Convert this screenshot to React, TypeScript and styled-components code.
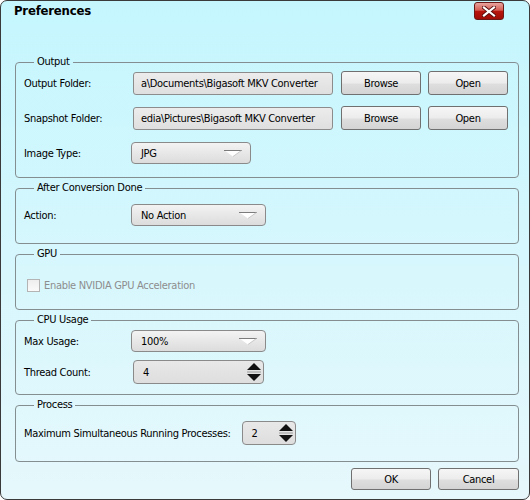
import styled, { createGlobalStyle } from 'styled-components';

const GlobalStyle = createGlobalStyle`
  html, body {
    margin: 0;
    padding: 0;
  }
  body {
    font-family: 'DejaVu Sans Condensed', 'Liberation Sans', sans-serif;
    font-size: 11px;
    letter-spacing: -0.3px;
    color: #000;
  }
`;

const Window = styled.div`
  position: relative;
  box-sizing: border-box;
  width: 530px;
  height: 500px;
  border: 1px solid #3a3a3a;
  border-radius: 7px;
  background: linear-gradient(#c5f6fe, #e6f8fc);
  display: flex;
  flex-direction: column;
  overflow: hidden;
`;

const TitleBar = styled.div`
  display: flex;
  justify-content: space-between;
  align-items: flex-start;
  height: 54px;
  padding: 0 25px 0 13px;
`;

const Title = styled.h1`
  margin: 3px 0 0;
  font-size: 13px;
  line-height: 14px;
  font-weight: bold;
  letter-spacing: -0.2px;
  font-family: 'DejaVu Sans Condensed', 'Liberation Sans', sans-serif;
`;

const CloseButton = styled.button`
  box-sizing: border-box;
  width: 30px;
  height: 18px;
  margin-top: 1px;
  padding: 0;
  border: 1px solid #6a1a16;
  border-radius: 3px;
  background: linear-gradient(#e7a49e 0%, #d65e54 45%, #b8160c 52%, #a00d06 100%);
  display: flex;
  align-items: center;
  justify-content: center;
`;

const Body = styled.div`
  display: flex;
  flex-direction: column;
  gap: 3px;
  padding: 0 10px 0 14px;
`;

const Group = styled.fieldset<{ $pad: string; $gap?: number }>`
  margin: 0;
  padding: ${(p) => p.$pad};
  border: 1px solid #848e90;
  border-radius: 4px;
  min-width: 0;
  display: flex;
  flex-direction: column;
  gap: ${(p) => p.$gap ?? 0}px;
`;

const Legend = styled.legend`
  margin-left: 10px;
  padding: 0 3px;
  font-size: 11px;
  line-height: 14px;
`;

const Row = styled.div`
  display: flex;
  align-items: center;
  height: 24px;
`;

const Label = styled.span<{ $wide?: boolean }>`
  flex-shrink: 0;
  width: ${(p) => (p.$wide ? 'auto' : '107px')};
  margin-right: ${(p) => (p.$wide ? '9px' : '0')};
  white-space: nowrap;
`;

const PathField = styled.div`
  box-sizing: border-box;
  width: 200px;
  height: 23px;
  margin-left: 2px;
  padding-left: 7px;
  border: 1px solid #8c8c8c;
  border-radius: 3px;
  background: linear-gradient(#ececec, #dfdfdf);
  display: flex;
  align-items: center;
  overflow: hidden;
  white-space: nowrap;
`;

const Button = styled.button<{ $width?: number; $height?: number }>`
  box-sizing: border-box;
  width: ${(p) => p.$width ?? 80}px;
  height: ${(p) => p.$height ?? 24}px;
  padding: 0;
  border: 1px solid #707070;
  border-radius: 3px;
  background: linear-gradient(#f6f6f6 0%, #ececec 50%, #dedede 55%, #d4d4d4 100%);
  font-family: inherit;
  font-size: 11px;
  letter-spacing: inherit;
  color: #000;
`;

const RowButtons = styled.div`
  display: flex;
  gap: 7px;
  margin-left: 8px;
`;

const Select = styled.div<{ $width: number }>`
  box-sizing: border-box;
  width: ${(p) => p.$width}px;
  height: 22px;
  padding: 0 8px 0 9px;
  border: 1px solid #8a8a8a;
  border-radius: 4px;
  background: linear-gradient(#f3f3f3, #dcdcdc);
  display: flex;
  align-items: center;
  justify-content: space-between;
`;

const Spinner = styled.div<{ $width: number }>`
  box-sizing: border-box;
  width: ${(p) => p.$width}px;
  height: 24px;
  margin-left: 2px;
  padding: 0 1px 0 9px;
  border: 1px solid #8a8a8a;
  border-radius: 4px;
  background: linear-gradient(#e8e8e8, #dedede);
  display: flex;
  align-items: center;
  justify-content: space-between;
`;

const CheckRow = styled.label`
  display: flex;
  align-items: center;
  height: 24px;
  color: #8d8d8d;
`;

const CheckBox = styled.span`
  box-sizing: border-box;
  width: 13px;
  height: 13px;
  margin: 0 4px 0 3px;
  border: 1px solid #b4b4b4;
  background: linear-gradient(#eeeeee, #fafafa);
`;

const Footer = styled.div`
  display: flex;
  justify-content: flex-end;
  gap: 7px;
  padding: 6px 10px 0 0;
`;

function DropArrow() {
  return (
    <svg width="18" height="7" viewBox="0 0 18 7">
      <polygon points="0.5,0.5 17.5,0.5 9,6.5" fill="#fff" />
      <line x1="0" y1="0.5" x2="18" y2="0.5" stroke="#7c7c7c" />
      <line x1="9" y1="6.5" x2="17.5" y2="0.5" stroke="#c8c8c8" />
    </svg>
  );
}

function SpinArrows() {
  return (
    <svg width="16" height="20" viewBox="0 0 16 20">
      <polygon points="1,8 15,8 8,1" fill="#111" />
      <line x1="1" y1="10" x2="15" y2="10" stroke="#9a9a9a" />
      <polygon points="1,12 15,12 8,19" fill="#111" />
    </svg>
  );
}

function CloseGlyph() {
  return (
    <svg width="14" height="11" viewBox="0 0 14 11">
      <path d="M2 1.5 L12 9.5 M12 1.5 L2 9.5" stroke="#5a1010" strokeWidth="4" strokeLinecap="square" />
      <path d="M2 1.5 L12 9.5 M12 1.5 L2 9.5" stroke="#fff" strokeWidth="2.2" strokeLinecap="square" />
    </svg>
  );
}

export default function App() {
  return (
    <>
      <GlobalStyle />
      <Window>
        <TitleBar>
          <Title>Preferences</Title>
          <CloseButton aria-label="Close">
            <CloseGlyph />
          </CloseButton>
        </TitleBar>
        <Body>
          <Group $pad="2px 8px 12px" $gap={11}>
            <Legend>Output</Legend>
            <Row>
              <Label>Output Folder:</Label>
              <PathField>a\Documents\Bigasoft MKV Converter</PathField>
              <RowButtons>
                <Button>Browse</Button>
                <Button>Open</Button>
              </RowButtons>
            </Row>
            <Row>
              <Label>Snapshot Folder:</Label>
              <PathField>edia\Pictures\Bigasoft MKV Converter</PathField>
              <RowButtons>
                <Button>Browse</Button>
                <Button>Open</Button>
              </RowButtons>
            </Row>
            <Row>
              <Label>Image Type:</Label>
              <Select $width={120}>
                JPG
                <DropArrow />
              </Select>
            </Row>
          </Group>

          <Group $pad="8px 8px 16px">
            <Legend>After Conversion Done</Legend>
            <Row>
              <Label>Action:</Label>
              <Select $width={135}>
                No Action
                <DropArrow />
              </Select>
            </Row>
          </Group>

          <Group $pad="12px 8px 12px">
            <Legend>GPU</Legend>
            <CheckRow>
              <CheckBox />
              Enable NVIDIA GPU Acceleration
            </CheckRow>
          </Group>

          <Group $pad="2px 8px 10px" $gap={7}>
            <Legend>CPU Usage</Legend>
            <Row>
              <Label>Max Usage:</Label>
              <Select $width={135}>
                100%
                <DropArrow />
              </Select>
            </Row>
            <Row>
              <Label>Thread Count:</Label>
              <Spinner $width={131}>
                4
                <SpinArrows />
              </Spinner>
            </Row>
          </Group>

          <Group $pad="9px 8px 16px">
            <Legend>Process</Legend>
            <Row>
              <Label $wide>Maximum Simultaneous Running Processes:</Label>
              <Spinner $width={54}>
                2
                <SpinArrows />
              </Spinner>
            </Row>
          </Group>
        </Body>
        <Footer>
          <Button $height={22}>OK</Button>
          <Button $width={81} $height={22}>
            Cancel
          </Button>
        </Footer>
      </Window>
    </>
  );
}
